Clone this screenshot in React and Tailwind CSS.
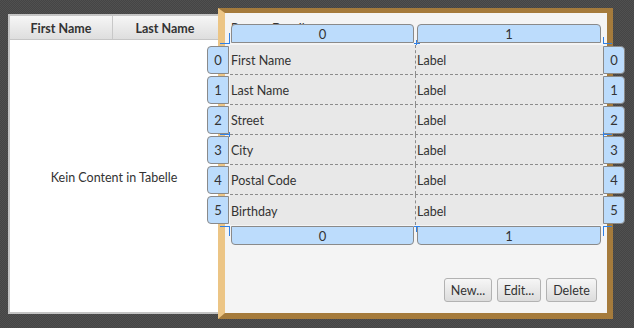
import React from "react";

const font = { fontFamily: "Lato, 'Noto Sans', sans-serif" };

const rows = ["First Name", "Last Name", "Street", "City", "Postal Code", "Birthday"];

const headBox =
  "h-[19px] shrink-0 bg-[#bcdcfc] border border-[#8a8a8a] flex items-center justify-center pt-[2px] text-[13px] text-[#333]";
const rowBox =
  "w-[22px] h-[28px] shrink-0 bg-[#bcdcfc] border border-[#8a8a8a] flex items-center justify-center pt-[2px] text-[13px] text-[#333]";

function Handles() {
  const c = "#2f80e6";
  const r = [
    [13, 19, 10, 1], [22, 9, 1, 11],
    [207, 19, 6, 1], [209, 16, 1, 5],
    [396, 13, 1, 7], [396, 19, 9, 1],
    [13, 110, 10, 1], [22, 108, 1, 5],
    [396, 110, 9, 1], [396, 108, 1, 5],
    [13, 202, 10, 1], [22, 202, 1, 10],
    [207, 202, 6, 1], [209, 202, 1, 6],
    [396, 202, 9, 1], [396, 202, 1, 10],
  ];
  return (
    <svg
      className="absolute left-0 top-0 pointer-events-none"
      width="420"
      height="230"
      viewBox="0 0 420 230"
    >
      {r.map(([x, y, w, h], i) => (
        <rect key={i} x={x} y={y} width={w} height={h} fill={c} />
      ))}
    </svg>
  );
}

export default function App() {
  return (
    <div
      className="w-[634px] h-[328px] overflow-hidden flex items-start pl-[8px] bg-[repeating-conic-gradient(#454545_0_25%,#505050_0_50%)] bg-[length:2px_2px]"
      style={font}
    >
      {/* Left table */}
      <div className="mt-[14px] w-[212px] h-[300px] shrink-0 border-2 border-[#c4c4c4] bg-white flex flex-col">
        <div className="h-[24px] flex border-b border-[#c6c6c6] bg-gradient-to-b from-[#f6f6f6] to-[#dedede] text-[12.5px] font-bold text-[#333]">
          <div className="w-[103px] border-r border-[#c8c8c8] flex items-center justify-center pt-[3px]">
            First Name
          </div>
          <div className="w-[104px] flex items-center justify-center pt-[3px]">Last Name</div>
        </div>
        <div className="flex-1 flex items-center justify-center pt-[4px] text-[12.5px] text-[#333]">
          Kein Content in Tabelle
        </div>
      </div>

      {/* Gold frame */}
      <div className="relative z-10 ml-[-2px] mt-[8px] w-[395px] h-[311px] shrink-0 border-t-[5px] border-r-[6px] border-b-[6px] border-l-[7px] border-t-[#a57b3c] border-r-[#a57b3c] border-b-[#a57b3c] border-l-[#ecc585] flex flex-col bg-[#f4f4f4]">
        <div className="h-[11px] pl-[6px] pt-[8px] whitespace-nowrap text-[12.5px] leading-[15px] text-[#333]">
          Person Details
        </div>

        <div className="relative ml-[-18px] w-[418px] shrink-0 flex flex-col">
          <div className="relative flex gap-[3px] pl-[24px] mb-[2px]">
            <div className={headBox + " w-[183px] rounded-t-[4px]"}>0</div>
            <div className={headBox + " w-[184px] rounded-t-[4px]"}>1</div>
          </div>

          {rows.map((r, i) => (
            <div key={r} className="flex items-center h-[30px]">
              <div className={rowBox + " rounded-l-[4px]"}>{i}</div>
              <div
                className={
                  "ml-[1px] w-[373px] shrink-0 h-full flex bg-[#e8e8e8] text-[12.5px] text-[#333] " +
                  (i < rows.length - 1 ? "border-b border-dashed border-[#8c8c8c]" : "")
                }
              >
                <div className="w-[186px] shrink-0 pl-[1px] pt-[4px] flex items-center border-r border-dashed border-[#8c8c8c]">
                  {r}
                </div>
                <div className="pl-[1px] pt-[4px] flex items-center">Label</div>
              </div>
              <div className={rowBox + " rounded-r-[4px]"}>{i}</div>
            </div>
          ))}

          <div className="flex gap-[3px] pl-[24px] mt-[1px]">
            <div className={headBox + " w-[183px] rounded-b-[4px]"}>0</div>
            <div className={headBox + " w-[184px] rounded-b-[4px]"}>1</div>
          </div>

          <Handles />
        </div>

        <div className="flex-1" />
        <div className="flex justify-end gap-[5px] pr-[10px] pb-[11px]">
          {[
            ["New...", "w-[48px]"],
            ["Edit...", "w-[44px]"],
            ["Delete", "w-[51px]"],
          ].map(([t, w]) => (
            <div
              key={t}
              className={
                w +
                " h-[24px] rounded-[3px] border border-[#b2b2b2] bg-gradient-to-b from-[#f6f6f6] to-[#dcdcdc] flex items-center justify-center pt-[3px] text-[12.5px] text-[#333]"
              }
            >
              {t}
            </div>
          ))}
        </div>
      </div>
    </div>
  );
}
